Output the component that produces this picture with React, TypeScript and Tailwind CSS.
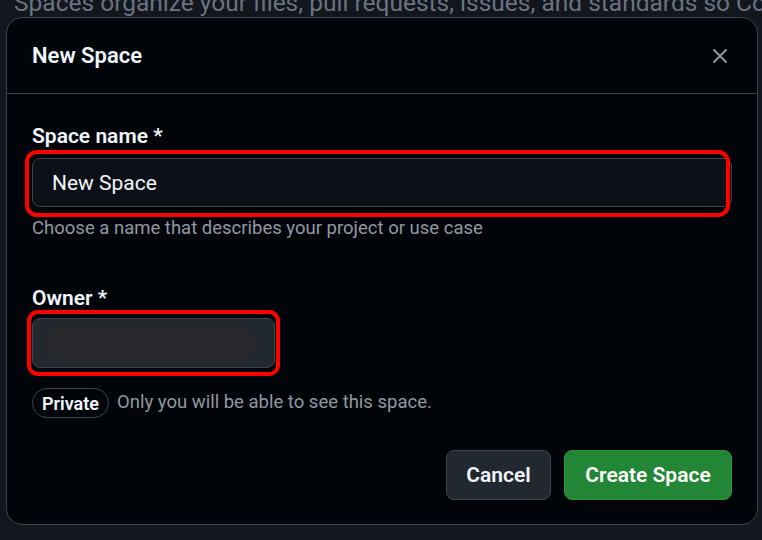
import React from "react";

const font = { fontFamily: "Roboto, 'Noto Sans', sans-serif" };

function CloseIcon() {
  return (
    <svg width="14" height="14" viewBox="0 0 14 14" fill="none" stroke="#9198a1" strokeWidth="2" strokeLinecap="round">
      <path d="M1 1 L13 13 M13 1 L1 13" />
    </svg>
  );
}

export default function App() {
  return (
    <div className="h-[540px] w-[762px] overflow-hidden bg-[#12161d]" style={font}>
      {/* page behind the dialog */}
      <div className="h-[17px] overflow-hidden pl-[14px]">
        <div className="-mt-[9px] whitespace-nowrap text-[24.5px] leading-[24.5px] text-[#6b7380]">
          Spaces organize your files, pull requests, issues, and standards so Copilot
        </div>
      </div>

      <div className="ml-[6px] flex h-[508px] w-[752px] flex-col rounded-[16px] border border-[#3d444d] bg-[#010409]">
        <div className="flex h-[76px] shrink-0 items-center justify-between border-b border-[#3d444d] pl-[25px] pr-[30px]">
          <h2 className="text-[22px] font-semibold text-[#f0f6fc]">New Space</h2>
          <button className="flex items-center justify-center">
            <CloseIcon />
          </button>
        </div>

        <div className="flex flex-1 flex-col px-[25px] pt-[28px]">
          <label className="text-[21px] font-semibold leading-[28px] text-[#f0f6fc]">Space name *</label>
          <div className="relative mt-[8px] w-[700px]">
            <div className="flex h-[49px] items-center rounded-[8px] border border-[#3d444d] bg-[#0d1117] pl-[19px] pt-[3px] text-[21px] text-[#f0f6fc]">
              New Space
            </div>
            <span className="pointer-events-none absolute -top-[8px] -bottom-[10px] -left-[7px] right-[2px] rounded-[12px] border-[4px] border-[#ff0000]" />
          </div>
          <p className="mt-[9px] text-[18.5px] leading-[24px] text-[#9198a1]">
            Choose a name that describes your project or use case
          </p>

          <label className="mt-[44px] text-[21px] font-semibold leading-[28px] text-[#f0f6fc]">Owner *</label>
          <div className="relative mt-[6px] w-[243px]">
            <div className="flex h-[50px] items-center rounded-[8px] border border-[#3d444d] bg-[#212830] px-[11px]">
              <div className="h-[38px] w-[213px] rounded-full bg-[#26282b]" />
            </div>
            <span className="pointer-events-none absolute -top-[8px] -bottom-[8px] -left-[5px] -right-[5px] rounded-[11px] border-[4px] border-[#ff0000]" />
          </div>

          <div className="mt-[20px] flex items-center gap-[8px]">
            <span className="flex h-[30px] items-center rounded-full border border-[#3d444d] px-[9px] text-[18px] font-semibold text-[#f0f6fc]">
              Private
            </span>
            <span className="text-[18.5px] text-[#9198a1]">Only you will be able to see this space.</span>
          </div>

          <div className="mt-[32px] flex justify-end gap-[13px]">
            <button className="flex h-[50px] w-[105px] items-center justify-center rounded-[8px] border border-[#3d444d] bg-[#212830] pt-[2px] text-[21px] font-semibold text-[#f0f6fc]">
              Cancel
            </button>
            <button className="flex h-[50px] w-[168px] items-center justify-center rounded-[8px] border border-[#2b9141] bg-[#238636] pt-[2px] text-[21px] font-semibold text-white">
              Create Space
            </button>
          </div>
        </div>
      </div>
    </div>
  );
}
